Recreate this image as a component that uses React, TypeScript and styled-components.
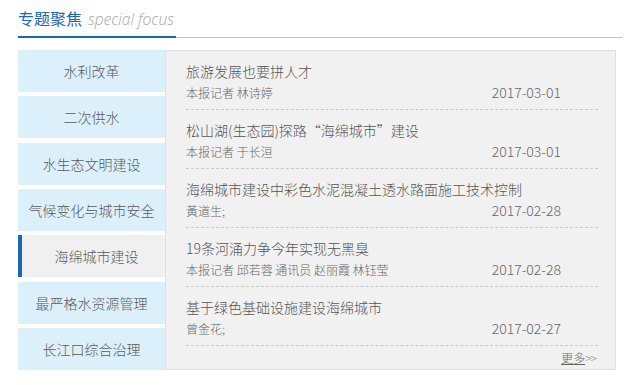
import { FC } from "react";
import styled, { createGlobalStyle } from "styled-components";

const GlobalStyle = createGlobalStyle`
  body {
    margin: 0;
    background: #fff;
    font-family: "Noto Sans CJK SC", "Liberation Sans", sans-serif;
  }
`;

const categories = [
  "水利改革",
  "二次供水",
  "水生态文明建设",
  "气候变化与城市安全",
  "海绵城市建设",
  "最严格水资源管理",
  "长江口综合治理",
];

const articles = [
  { title: "旅游发展也要拼人才", author: "本报记者 林诗婷", date: "2017-03-01" },
  { title: "松山湖(生态园)探路“海绵城市”建设", author: "本报记者 于长洹", date: "2017-03-01" },
  { title: "海绵城市建设中彩色水泥混凝土透水路面施工技术控制", author: "黃道生;", date: "2017-02-28" },
  { title: "19条河涌力争今年实现无黑臭", author: "本报记者 邱若蓉 通讯员 赵丽霞 林钰莹", date: "2017-02-28" },
  { title: "基于绿色基础设施建设海绵城市", author: "曾金花;", date: "2017-02-27" },
];

const App: FC = () => {
  return (
    <>
      <GlobalStyle />
      <Wrapper>
        <Header>
          <TitleBox>
            <Title>专题聚焦</Title>
            <SubTitle>special focus</SubTitle>
          </TitleBox>
        </Header>
        <Body>
          <Sidebar>
            {categories.map((c) => (
              <Tab key={c} active={c === "海绵城市建设"}>
                {c}
              </Tab>
            ))}
          </Sidebar>
          <Panel>
            <List>
              {articles.map((a) => (
                <Item key={a.title}>
                  <ItemTitle>{a.title}</ItemTitle>
                  <Meta>
                    <span>{a.author}</span>
                    <DateText>{a.date}</DateText>
                  </Meta>
                </Item>
              ))}
            </List>
            <More>
              <MoreLink>更多</MoreLink>
              <Arrows>&gt;&gt;</Arrows>
            </More>
          </Panel>
        </Body>
      </Wrapper>
    </>
  );
};

export default App;

const Wrapper = styled.div`
  width: 605px;
  padding-left: 18px;
`;

const Header = styled.div`
  height: 37px;
  border-bottom: 1px solid #c4c4c4;
  display: flex;
`;

const TitleBox = styled.div`
  width: 158px;
  height: 36px;
  border-bottom: 2px solid #1b67b1;
  display: flex;
  align-items: baseline;
  gap: 6px;
  line-height: 36px;
  white-space: nowrap;
`;

const Title = styled.span`
  font-size: 16px;
  color: #1b67b1;
`;

const SubTitle = styled.span`
  font-family: "Open Sans", sans-serif;
  font-style: italic;
  font-weight: 300;
  font-size: 15.6px;
  color: #a8a8a8;
`;

const Body = styled.div`
  margin-top: 12px;
  display: flex;
`;

const Sidebar = styled.ul`
  list-style: none;
  margin: 0;
  padding: 0;
  width: 147px;
  display: flex;
  flex-direction: column;
  gap: 4.33px;
`;

interface TabProps {
  active?: boolean;
}
const Tab = styled.li<TabProps>`
  height: 42px;
  line-height: 42px;
  text-align: center;
  font-size: 14px;
  font-weight: 300;
  color: #5a5a5a;
  background: ${({ active }) => (active ? "#f0f0f0" : "#dcf0fb")};
  border-left: ${({ active }) => (active ? "4px solid #1b67b1" : "none")};
  padding-left: ${({ active }) => (active ? "6px" : "0")};
  white-space: nowrap;
`;

const Panel = styled.div`
  width: 412px;
  height: 318px;
  background: #f1f1f1;
  border: 1px solid #e0e0e0;
  padding: 0 17px 0 20px;
  display: flex;
  flex-direction: column;
`;

const List = styled.ul`
  list-style: none;
  margin: 0;
  padding: 0;
`;

const Item = styled.li`
  height: 59px;
  padding-top: 10px;
  box-sizing: border-box;
  border-bottom: 1px dashed #c8c8c8;
`;

const ItemTitle = styled.div`
  font-size: 14px;
  font-weight: 300;
  line-height: 20px;
  color: #555;
  white-space: nowrap;
`;

const Meta = styled.div`
  display: flex;
  justify-content: space-between;
  align-items: baseline;
  padding-right: 37px;
  font-size: 12px;
  font-weight: 300;
  line-height: 22px;
  color: #666;
`;

const DateText = styled.span`
  font-size: 14px;
`;

const More = styled.div`
  height: 24px;
  line-height: 24px;
  text-align: right;
  padding-right: 2px;
  font-size: 12px;
  font-weight: 300;
  color: #666;
`;

const MoreLink = styled.span`
  text-decoration: underline;
`;

const Arrows = styled.span`
  color: #888;
  letter-spacing: -1px;
`;
